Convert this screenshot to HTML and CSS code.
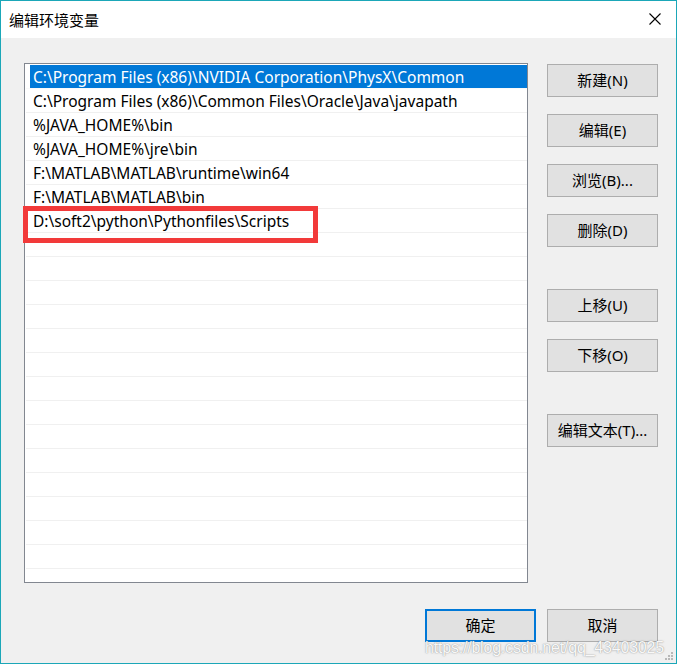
FILE: index.html
```html
<!DOCTYPE html>
<html lang="zh-CN">
<head>
<meta charset="utf-8">
<title>编辑环境变量</title>
<link rel="stylesheet" href="styles.css">
</head>
<body>
<div class="window">
  <div class="titlebar">
    <span class="title">编辑环境变量</span>
    <svg class="close" width="12" height="12" viewBox="0 0 12 12"><path d="M0.5 0.5 L11.5 11.5 M11.5 0.5 L0.5 11.5" stroke="#000" stroke-width="1.1" fill="none"/></svg>
  </div>
  <div class="main">
    <div class="list">
      <div class="row sel"><span class="cell">C:\Program Files (x86)\NVIDIA Corporation\PhysX\Common</span></div>
      <div class="row"><span class="cell">C:\Program Files (x86)\Common Files\Oracle\Java\javapath</span></div>
      <div class="row"><span class="cell">%JAVA_HOME%\bin</span></div>
      <div class="row"><span class="cell">%JAVA_HOME%\jre\bin</span></div>
      <div class="row"><span class="cell">F:\MATLAB\MATLAB\runtime\win64</span></div>
      <div class="row"><span class="cell">F:\MATLAB\MATLAB\bin</span></div>
      <div class="row"><span class="cell">D:\soft2\python\Pythonfiles\Scripts</span></div>
      <div class="row"><span class="cell"></span></div>
      <div class="row"><span class="cell"></span></div>
      <div class="row"><span class="cell"></span></div>
      <div class="row"><span class="cell"></span></div>
      <div class="row"><span class="cell"></span></div>
      <div class="row"><span class="cell"></span></div>
      <div class="row"><span class="cell"></span></div>
      <div class="row"><span class="cell"></span></div>
      <div class="row"><span class="cell"></span></div>
      <div class="row"><span class="cell"></span></div>
      <div class="row"><span class="cell"></span></div>
      <div class="row"><span class="cell"></span></div>
      <div class="row"><span class="cell"></span></div>
      <div class="row"><span class="cell"></span></div>
      <div class="row"><span class="cell"></span></div>
    </div>
    <div class="side">
      <button class="btn">新建(N)</button>
      <button class="btn">编辑(E)</button>
      <button class="btn">浏览(B)...</button>
      <button class="btn group-end">删除(D)</button>
      <button class="btn">上移(U)</button>
      <button class="btn group-end">下移(O)</button>
      <button class="btn">编辑文本(T)...</button>
    </div>
  </div>
  <div class="footer">
    <button class="btn default">确定</button>
    <button class="btn">取消</button>
  </div>
  <div class="highlight"></div>
  <div class="watermark">https://blog.csdn.net/qq_43403025</div>
  <svg class="grip" width="10" height="10" viewBox="0 0 10 10">
    <rect x="7" y="1" width="2" height="2" fill="#b8b8b8"/>
    <rect x="4" y="4" width="2" height="2" fill="#b8b8b8"/>
    <rect x="7" y="4" width="2" height="2" fill="#b8b8b8"/>
    <rect x="1" y="7" width="2" height="2" fill="#b8b8b8"/>
    <rect x="4" y="7" width="2" height="2" fill="#b8b8b8"/>
    <rect x="7" y="7" width="2" height="2" fill="#b8b8b8"/>
  </svg>
</div>
</body>
</html>
```
FILE: styles.css
```css
* { box-sizing: border-box; }
html, body { margin: 0; padding: 0; background: #f0f0f0; }
body {
  font-family: "Noto Sans", "Noto Sans CJK SC", sans-serif;
  font-size: 15px;
  color: #000;
}
.window {
  position: relative;
  width: 677px;
  height: 664px;
  border: 1px solid #1ba7b8;
  background: #f0f0f0;
  display: flex;
  flex-direction: column;
  overflow: hidden;
}
.titlebar {
  height: 37px;
  flex: none;
  background: #fff;
  display: flex;
  align-items: center;
  justify-content: space-between;
  padding: 0 15px 1px 8px;
}
.title {
  font-family: "Noto Sans CJK SC", sans-serif;
  font-size: 15px;
  color: #000;
}
.close { display: block; }
.main {
  display: flex;
  padding: 25px 18px 0 23px;
  flex: none;
}
.list {
  width: 504px;
  height: 520px;
  border: 1px solid #828790;
  background: #fff;
  padding: 1px 0 0 1px;
  overflow: hidden;
  flex: none;
}
.row {
  height: 24px;
  border-bottom: 1px solid #f0f0f0;
  display: flex;
}
.row.sel { border-bottom-color: #fafafa; }
.cell {
  flex: 1;
  margin-left: 4px;
  padding: 1px 0 0 3px;
  height: 23px;
  line-height: 23px;
  white-space: nowrap;
  font-family: "Noto Sans", "Noto Sans CJK SC", sans-serif;
  font-size: 15.5px;
}
.row.sel .cell {
  background: #0078d7;
  color: #fff;
}
.side {
  margin-left: 19px;
  padding-top: 1px;
  display: flex;
  flex-direction: column;
  gap: 17px;
}
.btn {
  width: 111px;
  height: 33px;
  border: 1px solid #adadad;
  background: #e1e1e1;
  font-family: "Noto Sans", "Noto Sans CJK SC", sans-serif;
  font-size: 15px;
  color: #000;
  padding: 0 0 2px 0;
  margin: 0;
  display: flex;
  align-items: center;
  justify-content: center;
}
.side .group-end { margin-bottom: 25px; }
.footer {
  display: flex;
  justify-content: flex-end;
  gap: 11px;
  padding: 26px 18px 0 0;
}
.btn.default { border: 2px solid #0078d7; }
.highlight {
  position: absolute;
  left: 22px;
  top: 205px;
  width: 295px;
  height: 37px;
  border: 5px solid #f23a3a;
}
.watermark {
  position: absolute;
  left: 424px;
  top: 635px;
  font-family: "Liberation Sans", Arial, sans-serif;
  font-size: 16px;
  line-height: 24px;
  color: rgba(255, 255, 255, 0.95);
  text-shadow: 0 0 1px rgba(110, 110, 110, 0.7), 0 0 2px rgba(150, 150, 150, 0.5);
  white-space: nowrap;
  letter-spacing: -0.2px;
}
.grip {
  position: absolute;
  right: 2px;
  bottom: 2px;
}
```
